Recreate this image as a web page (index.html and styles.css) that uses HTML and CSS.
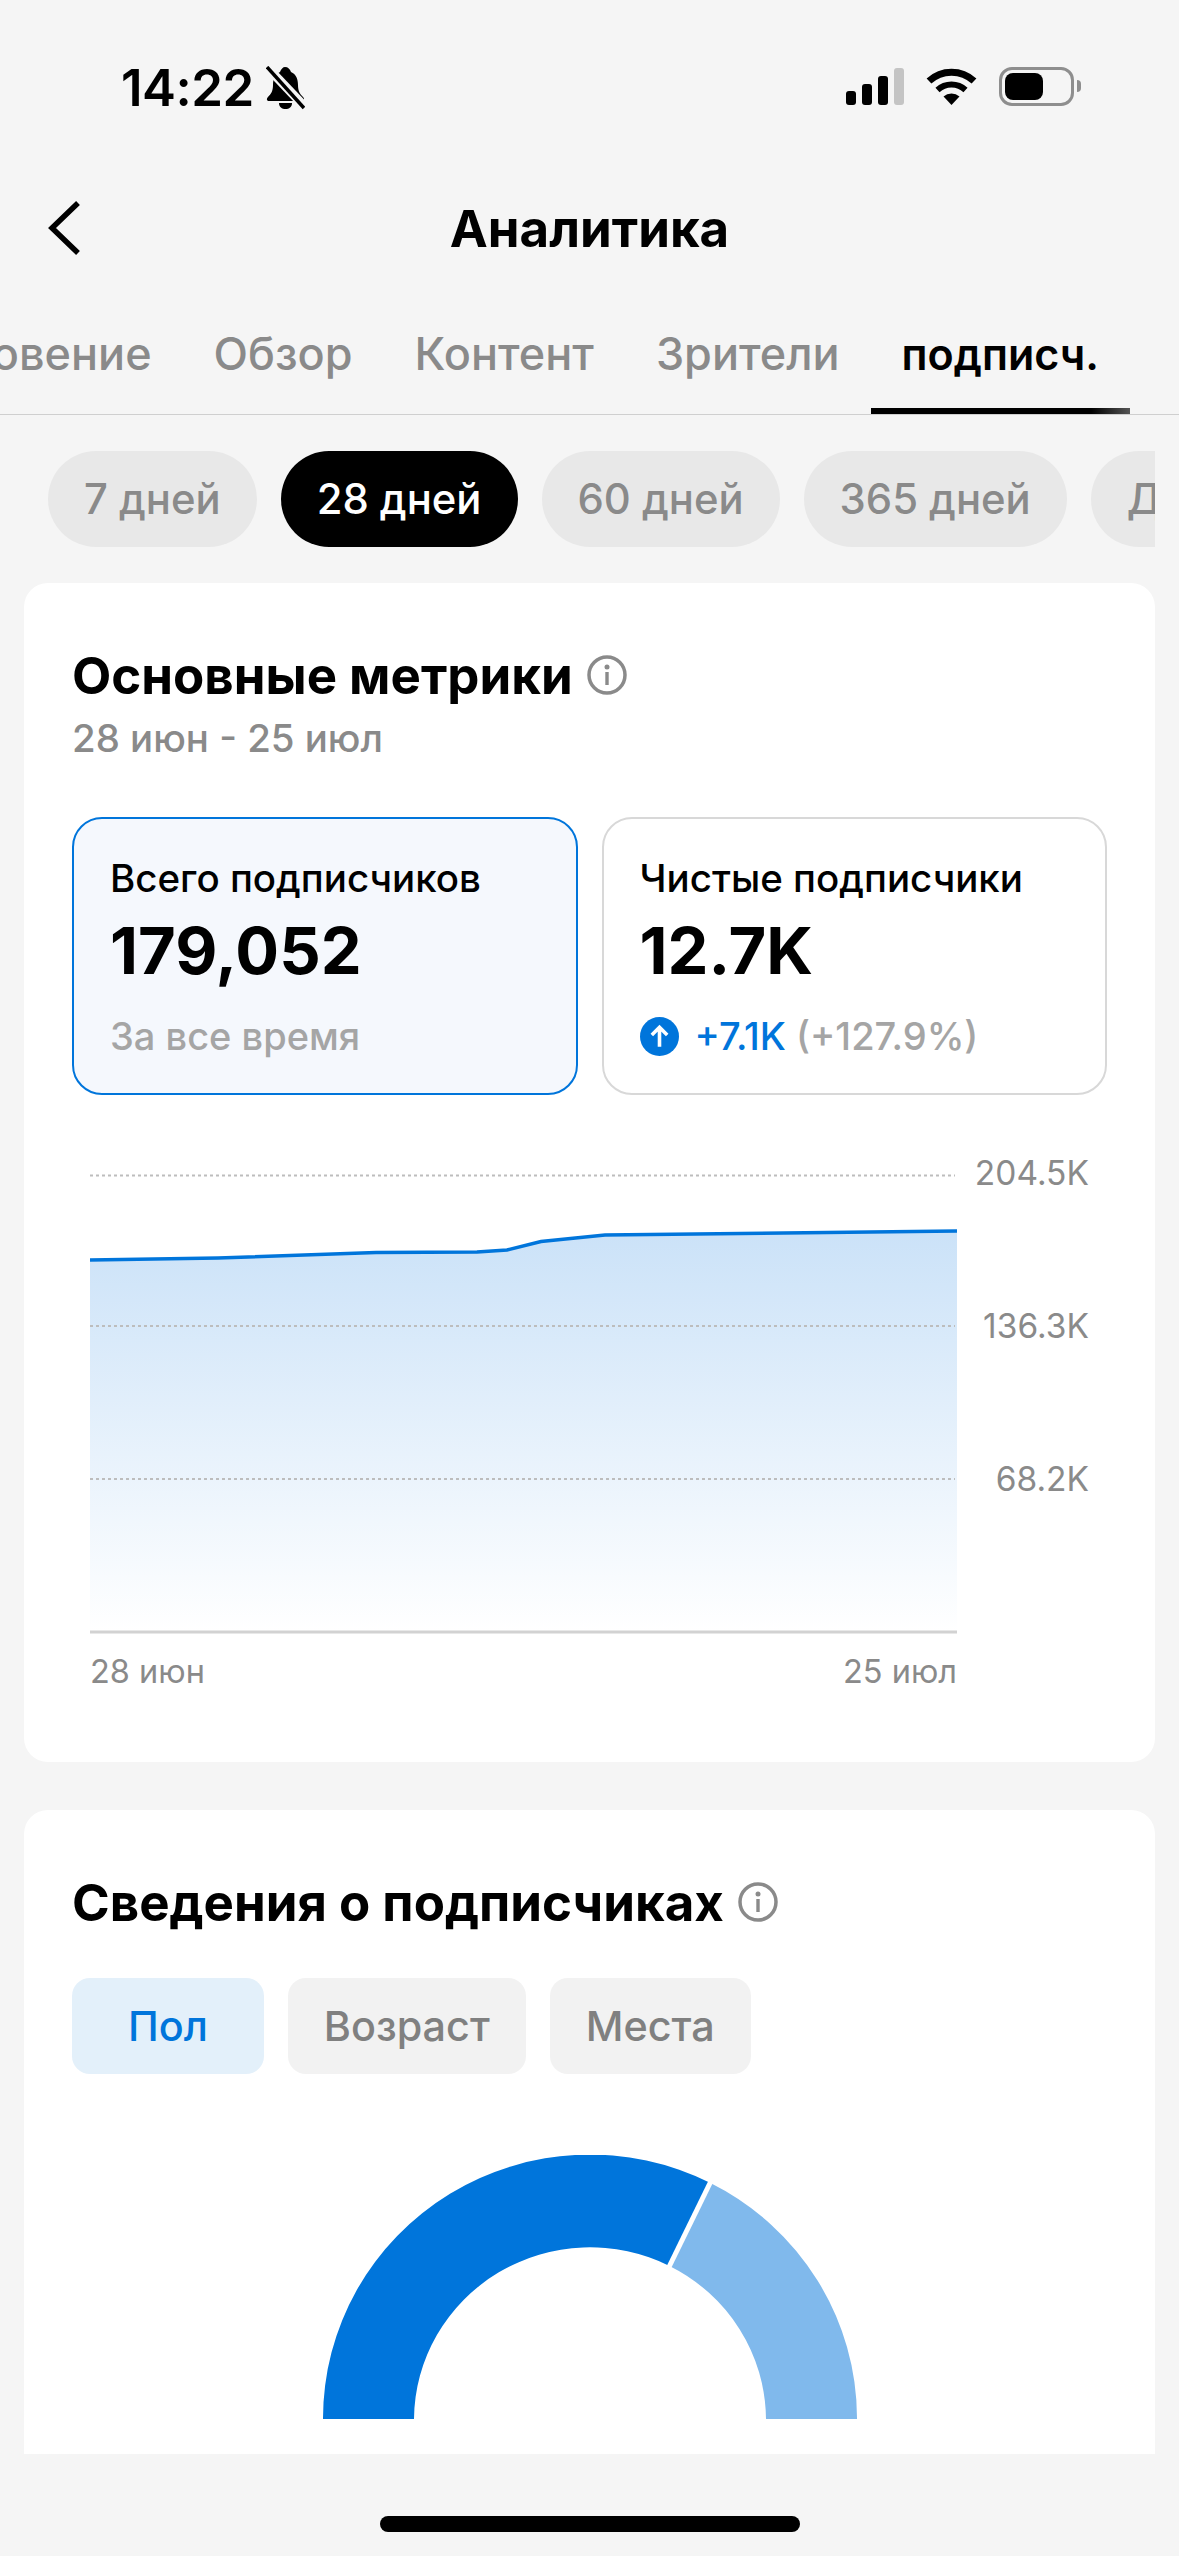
FILE: index.html
```html
<!DOCTYPE html>
<html lang="ru">
  <head>
    <meta charset="UTF-8"/>
    <title>Аналитика</title>
    <link rel="stylesheet" href="styles.css">
  </head>
  <body>
    <div class="status">
      <div class="status-left">
        <span class="time">14:22</span>
        <svg class="bell" viewBox="0 0 39 44">
          <path d="M19 1c3 0 5 2 6 5 5 2 7 7 7 13 0 6 2 9 5 12 2 2 1 4-1 4H3c-2 0-3-2-1-4 3-3 5-6 5-12 0-6 2-11 7-13 1-3 3-5 5-5z" fill="#000"/>
          <path d="M13 37h13c0 4-3 6-6.500 6S13 41 13 37z" fill="#000"/>
          <path d="M0 0L39 41" stroke="#f5f5f5" stroke-width="9"/>
          <path d="M1 1L38 42" stroke="#000" stroke-width="3.500"/>
        </svg>
      </div>
      <div class="status-right">
        <div class="signal">
          <i class="bar bar1"></i><i class="bar bar2"></i><i class="bar bar3"></i><i class="bar bar4"></i>
        </div>
        <svg class="wifi" viewBox="0 0 51 37">
          <path d="M3 13A33 33 0 0 1 48 13" fill="none" stroke="#000" stroke-width="7"/>
          <path d="M11.500 22A20.500 20.500 0 0 1 39.500 22" fill="none" stroke="#000" stroke-width="6"/>
          <path d="M25.500 37L17.500 28.500A12 12 0 0 1 33.500 28.500Z" fill="#000"/>
        </svg>
        <div class="battery"><div class="battery-fill"></div></div>
        <div class="battery-tip"></div>
      </div>
    </div>

    <div class="nav">
      <svg class="back" viewBox="0 0 34 56">
        <path d="M30 3L4 28L30 53" fill="none" stroke="#000" stroke-width="5.500"/>
      </svg>
      <h1>Аналитика</h1>
    </div>

    <div class="tabs">
      <a class="tab">Вдохновение</a>
      <a class="tab">Обзор</a>
      <a class="tab">Контент</a>
      <a class="tab">Зрители</a>
      <a class="tab active">подписч.</a>
    </div>

    <div class="pills">
      <a class="pill">7 дней</a>
      <a class="pill active">28 дней</a>
      <a class="pill">60 дней</a>
      <a class="pill">365 дней</a>
      <a class="pill">Другое</a>
    </div>

    <div class="card">
      <div class="card-title">
        <h2>Основные метрики</h2>
        <svg class="info" viewBox="0 0 40 40">
          <circle cx="20" cy="20" r="18" fill="none" stroke="#8a8a8a" stroke-width="3.500"/>
          <circle cx="20" cy="12" r="2.500" fill="#8a8a8a"/>
          <rect x="18.300" y="17" width="3.400" height="13" fill="#8a8a8a"/>
        </svg>
      </div>
      <div class="date">28 июн - 25 июл</div>

      <div class="metrics">
        <div class="metric selected">
          <div class="metric-label">Всего подписчиков</div>
          <div class="metric-value">179,052</div>
          <div class="metric-sub">За все время</div>
        </div>
        <div class="metric">
          <div class="metric-label">Чистые подписчики</div>
          <div class="metric-value">12.7K</div>
          <div class="metric-sub">
            <svg class="up" viewBox="0 0 38 38">
              <circle cx="19" cy="19" r="19" fill="#0075db"/>
              <path d="M19 29V10M11.500 17.500L19 10L26.500 17.500" fill="none" stroke="#fff" stroke-width="3.500"/>
            </svg>
            <span class="plus">+7.1K</span>
            <span>(+127.9%)</span>
          </div>
        </div>
      </div>

      <svg class="chart" viewBox="0 0 1035 560">
        <defs>
          <linearGradient id="area" x1="0" y1="0" x2="0" y2="1">
            <stop offset="0" stop-color="#cbe2f8"/>
            <stop offset="1" stop-color="#ffffff"/>
          </linearGradient>
        </defs>
        <path d="M18 120L146 118L304 112.500L405 112L435 110L469 101.500L533 95L885 91V492H18Z" fill="url(#area)"/>
        <path class="grid" d="M18 35.500H883"/>
        <path class="grid" d="M18 186H883"/>
        <path class="grid" d="M18 339H883"/>
        <path d="M18 492H885" stroke="#d2d2d2" stroke-width="3"/>
        <path d="M18 120L146 118L304 112.500L405 112L435 110L469 101.500L533 95L885 91" fill="none" stroke="#0075db" stroke-width="3.500"/>
        <text class="axis" x="1017" y="45" text-anchor="end">204.5K</text>
        <text class="axis" x="1017" y="198" text-anchor="end">136.3K</text>
        <text class="axis" x="1017" y="351" text-anchor="end">68.2K</text>
        <text class="axis axis-x" x="18" y="543">28 июн</text>
        <text class="axis axis-x" x="885" y="543" text-anchor="end">25 июл</text>
      </svg>
    </div>

    <div class="card card-clipped">
      <div class="card-title">
        <h2>Сведения о подписчиках</h2>
        <svg class="info" viewBox="0 0 40 40">
          <circle cx="20" cy="20" r="18" fill="none" stroke="#8a8a8a" stroke-width="3.500"/>
          <circle cx="20" cy="12" r="2.500" fill="#8a8a8a"/>
          <rect x="18.300" y="17" width="3.400" height="13" fill="#8a8a8a"/>
        </svg>
      </div>
      <div class="segments">
        <a class="segment active">Пол</a>
        <a class="segment">Возраст</a>
        <a class="segment">Места</a>
      </div>
      <svg class="donut" viewBox="0 0 534 264">
        <path d="M0 264A267 264 0 0 1 387.500 28L346.500 111A176 173 0 0 0 91 264Z" fill="#0075db"/>
        <path d="M387.500 28A267 264 0 0 1 534 264H443A176 173 0 0 0 346.500 111Z" fill="#80b9ec"/>
        <path d="M389 24L345 114" stroke="#fff" stroke-width="5"/>
      </svg>
    </div>

    <div class="home"><div class="home-bar"></div></div>
  </body>
</html>
```

FILE: styles.css
```css
*{
  box-sizing: border-box;
  margin: 0px;
  font-family: Inter, "Noto Sans", sans-serif;
}

body{
  width: 1179px;
  height: 2556px;
  overflow: hidden;
  background-color: #f5f5f5;
  display: flex;
  flex-direction: column;
}

/* status bar */
.status{
  height: 150px;
  padding: 66px 98px 0px 121px;
  display: flex;
  justify-content: space-between;
  align-items: flex-start;
}

.status-left{
  display: flex;
  align-items: center;
  gap: 12px;
}

.time{
  font-size: 51px;
  font-weight: 600;
  letter-spacing: -0.5px;
  line-height: 44px;
  color: #000;
}

.bell{
  width: 39px;
  height: 44px;
}

.status-right{
  display: flex;
  align-items: center;
  height: 40px;
}

.signal{
  display: flex;
  align-items: flex-end;
  gap: 6px;
  height: 37px;
}

.bar{
  display: block;
  width: 10px;
  background-color: #000;
  border-radius: 3px;
}

.bar1{ height: 14px; }
.bar2{ height: 21px; }
.bar3{ height: 29px; }
.bar4{ height: 37px; background-color: #c4c4c4; }

.wifi{
  width: 51px;
  height: 37px;
  margin-left: 22px;
}

.battery{
  width: 75px;
  height: 39px;
  margin-left: 22px;
  padding: 3px;
  border: 3px solid #8e8e8e;
  border-radius: 13px;
}

.battery-fill{
  width: 38px;
  height: 27px;
  background-color: #000;
  border-radius: 8px;
}

.battery-tip{
  width: 4px;
  height: 12px;
  margin-left: 3px;
  background-color: #8e8e8e;
  border-radius: 0px 6px 6px 0px;
}

/* title row */
.nav{
  height: 156px;
  display: grid;
  grid-template-columns: 1fr auto 1fr;
  align-items: center;
  padding-left: 48px;
}

.back{
  width: 34px;
  height: 56px;
}

.nav h1{
  font-size: 51px;
  font-weight: 700;
  color: #000;
  margin-left: -48px;
}

/* tabs */
.tabs{
  height: 109px;
  display: flex;
  justify-content: flex-end;
  padding-right: 49px;
  overflow: hidden;
  border-bottom: 1px solid #cfcfcf;
}

.tab{
  flex-shrink: 0;
  padding: 22px 31px 0px;
  font-size: 45px;
  font-weight: 500;
  line-height: 52px;
  color: #8a8a8a;
}

.tab.active{
  color: #000;
  font-size: 43px;
  font-weight: 600;
  position: relative;
}

.tab.active::after{
  content: "";
  position: absolute;
  left: 0px;
  right: 0px;
  bottom: 0px;
  height: 6px;
  background: linear-gradient(90deg, #000 85%, #555);
}

/* period pills */
.pills{
  margin: 36px 24px 0px;
  padding-left: 24px;
  display: flex;
  gap: 24px;
  overflow: hidden;
}

.pill{
  flex-shrink: 0;
  height: 96px;
  padding: 0px 36px;
  border-radius: 48px;
  background-color: #e8e8e8;
  font-size: 41.8px;
  font-weight: 500;
  line-height: 96px;
  color: #8a8a8a;
}

.pill.active{
  background-color: #000;
  color: #fff;
}

/* cards */
.card{
  margin: 36px 24px 0px;
  padding: 63px 48px 62px;
  background-color: #fff;
  border-radius: 24px;
}

.card-clipped{
  margin-top: 48px;
  height: 644px;
  padding-bottom: 0px;
  border-radius: 24px 24px 0px 0px;
}

.card-title{
  display: flex;
  align-items: center;
  gap: 14px;
}

.card-title h2{
  font-size: 51px;
  font-weight: 700;
  line-height: 60px;
  color: #000;
}

.info{
  width: 40px;
  height: 40px;
  margin-bottom: 3px;
}

.date{
  margin-top: 8px;
  font-size: 38.4px;
  font-weight: 500;
  line-height: 48px;
  color: #8a8a8a;
}

.metrics{
  margin-top: 55px;
  display: grid;
  grid-template-columns: 1fr 1fr;
  gap: 24px;
}

.metric{
  height: 278px;
  padding: 35px 36px 0px;
  border: 2px solid #d8d8d8;
  border-radius: 30px;
}

.metric.selected{
  border-color: #0075db;
  background-color: #f5f8fd;
}

.metric-label{
  font-size: 38.5px;
  font-weight: 500;
  line-height: 48px;
  color: #000;
}

.metric-value{
  margin-top: 7px;
  font-size: 65px;
  font-weight: 700;
  line-height: 84px;
  color: #000;
}

.metric-sub{
  margin-top: 19px;
  display: flex;
  align-items: center;
  gap: 10px;
  font-size: 38px;
  font-weight: 500;
  line-height: 48px;
  color: #a5a5a5;
}

.up{
  width: 39px;
  height: 39px;
  margin-right: 6px;
}

.plus{
  color: #0075db;
}

.chart{
  display: block;
  width: 1035px;
  height: 560px;
  margin-top: 45px;
}

.grid{
  stroke: #bdbdbd;
  stroke-width: 2;
  stroke-dasharray: 3 3;
}

.axis{
  font-size: 33.5px;
  fill: #8a8a8a;
}

.axis-x{
  font-size: 32.5px;
}

/* sub tabs */
.segments{
  margin-top: 45px;
  display: flex;
  gap: 24px;
}

.segment{
  height: 96px;
  padding: 0px 36px;
  border-radius: 18px;
  background-color: #f2f2f2;
  font-size: 41.3px;
  font-weight: 500;
  line-height: 96px;
  color: #808080;
}

.segment.active{
  padding: 0px 56px;
  background-color: #e3f0fa;
  color: #0075db;
}

.donut{
  display: block;
  width: 534px;
  height: 264px;
  margin: 81px auto 0px;
}

/* home indicator */
.home{
  margin-top: 62px;
  display: flex;
  justify-content: center;
}

.home-bar{
  width: 420px;
  height: 16px;
  background-color: #000;
  border-radius: 8px;
}
```
